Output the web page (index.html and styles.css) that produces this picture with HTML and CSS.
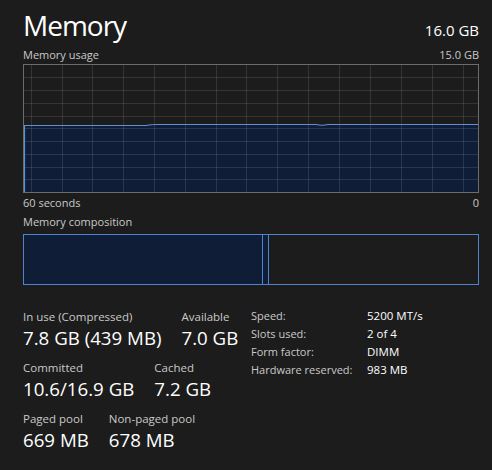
FILE: index.html
```html
<!DOCTYPE html>
<html>
<head>
<meta charset="utf-8">
<link rel="stylesheet" href="styles.css">
</head>
<body>
<div class="page">
  <div class="header">
    <h1 class="title">Memory</h1>
    <div class="total">16.0 GB</div>
  </div>
  <div class="caption-row">
    <span>Memory usage</span>
    <span>15.0 GB</span>
  </div>
  <div class="graph">
    <svg width="454" height="127" viewBox="0 0 454 127">
      <path class="area" d="M0 60.5 L122 60.5 Q127 59.5 132 59.5 L292 59.5 Q298 61 304 59.5 L454 59.5 L454 127 L0 127 Z"/>
      <g class="grid">
        <line x1="7.5" y1="0" x2="7.5" y2="127"/>
        <line x1="38.5" y1="0" x2="38.5" y2="127"/>
        <line x1="68.5" y1="0" x2="68.5" y2="127"/>
        <line x1="99.5" y1="0" x2="99.5" y2="127"/>
        <line x1="130.5" y1="0" x2="130.5" y2="127"/>
        <line x1="161.5" y1="0" x2="161.5" y2="127"/>
        <line x1="192.5" y1="0" x2="192.5" y2="127"/>
        <line x1="222.5" y1="0" x2="222.5" y2="127"/>
        <line x1="253.5" y1="0" x2="253.5" y2="127"/>
        <line x1="284.5" y1="0" x2="284.5" y2="127"/>
        <line x1="315.5" y1="0" x2="315.5" y2="127"/>
        <line x1="346.5" y1="0" x2="346.5" y2="127"/>
        <line x1="377.5" y1="0" x2="377.5" y2="127"/>
        <line x1="408.5" y1="0" x2="408.5" y2="127"/>
        <line x1="439.5" y1="0" x2="439.5" y2="127"/>
        <line x1="0" y1="12.5" x2="454" y2="12.5"/>
        <line x1="0" y1="25.5" x2="454" y2="25.5"/>
        <line x1="0" y1="38.5" x2="454" y2="38.5"/>
        <line x1="0" y1="51.5" x2="454" y2="51.5"/>
        <line x1="0" y1="63.5" x2="454" y2="63.5"/>
        <line x1="0" y1="76.5" x2="454" y2="76.5"/>
        <line x1="0" y1="89.5" x2="454" y2="89.5"/>
        <line x1="0" y1="102.5" x2="454" y2="102.5"/>
        <line x1="0" y1="114.5" x2="454" y2="114.5"/>
      </g>
      <path class="edge" d="M0.5 127 L0.5 60.5 L122 60.5 Q127 59.5 132 59.5 L292 59.5 Q298 61 304 59.5 L454 59.5"/>
    </svg>
  </div>
  <div class="caption-row axis">
    <span>60 seconds</span>
    <span>0</span>
  </div>
  <div class="caption-row comp-label">
    <span>Memory composition</span>
  </div>
  <div class="composition">
    <div class="seg seg-inuse" style="width: 240px"></div>
    <div class="seg seg-modified" style="width: 7px"></div>
    <div class="seg seg-standby"></div>
  </div>
  <div class="details">
    <div class="stats">
      <div class="stat-row">
        <div class="stat"><div class="label">In use (Compressed)</div><div class="value">7.8 GB (439 MB)</div></div>
        <div class="stat"><div class="label">Available</div><div class="value">7.0 GB</div></div>
      </div>
      <div class="stat-row">
        <div class="stat"><div class="label">Committed</div><div class="value">10.6/16.9 GB</div></div>
        <div class="stat"><div class="label">Cached</div><div class="value">7.2 GB</div></div>
      </div>
      <div class="stat-row">
        <div class="stat"><div class="label">Paged pool</div><div class="value">669 MB</div></div>
        <div class="stat"><div class="label">Non-paged pool</div><div class="value">678 MB</div></div>
      </div>
    </div>
    <dl class="props">
      <dt>Speed:</dt><dd>5200 MT/s</dd>
      <dt>Slots used:</dt><dd>2 of 4</dd>
      <dt>Form factor:</dt><dd>DIMM</dd>
      <dt>Hardware reserved:</dt><dd>983 MB</dd>
    </dl>
  </div>
</div>
</body>
</html>
```
FILE: styles.css
```css
html, body {
  margin: 0;
  padding: 0;
  background: #1c1c1c;
}
body {
  font-family: "Open Sans", "Noto Sans", sans-serif;
  color: #ffffff;
  width: 492px;
  height: 470px;
  overflow: hidden;
}
.page {
  width: 456px;
  margin-left: 23px;
}
.header {
  display: flex;
  justify-content: space-between;
  align-items: baseline;
  height: 46px;
}
.title {
  margin: 0;
  font-weight: 400;
  font-size: 28px;
  line-height: 52px;
  letter-spacing: -1px;
  margin-top: -1px;
}
.total {
  font-size: 15px;
}
.caption-row {
  display: flex;
  justify-content: space-between;
  font-size: 11px;
  line-height: 18px;
  color: #c9c9c9;
}
.graph {
  border: 1px solid #6c6c6c;
  width: 454px;
  height: 127px;
}
.graph svg {
  display: block;
}
.area {
  fill: #0f1e36;
}
.grid line {
  stroke: rgba(255, 255, 255, 0.11);
  stroke-width: 1;
}
.edge {
  fill: none;
  stroke: #5e90d8;
  stroke-width: 1.2;
}
.axis {
  line-height: 19px;
}
.comp-label {
  line-height: 19px;
}
.composition {
  display: flex;
  height: 51px;
  margin-top: 3px;
}
.seg {
  box-sizing: border-box;
  border: 1px solid #4f82cf;
  height: 100%;
}
.seg + .seg {
  margin-left: -1px;
}
.seg-inuse {
  background: #0f1e36;
}
.seg-modified {
  background: #0f1e36;
}
.seg-standby {
  flex: 1;
}
.details {
  display: flex;
  margin-top: 24px;
}
.stats {
  width: 228px;
  display: flex;
  flex-direction: column;
  gap: 10px;
}
.stat-row {
  display: flex;
  gap: 20px;
}
.label {
  font-size: 11.5px;
  line-height: 16px;
  color: #c9c9c9;
}
.value {
  font-size: 18.7px;
  line-height: 25px;
}
.props {
  margin: -2px 0 0;
  display: grid;
  grid-template-columns: 116px auto;
  grid-auto-rows: 18px;
  font-size: 11px;
  line-height: 18px;
}
.props dt {
  color: #c9c9c9;
}
.props dd {
  margin: 0;
  color: #ffffff;
  font-size: 11.5px;
}
```
